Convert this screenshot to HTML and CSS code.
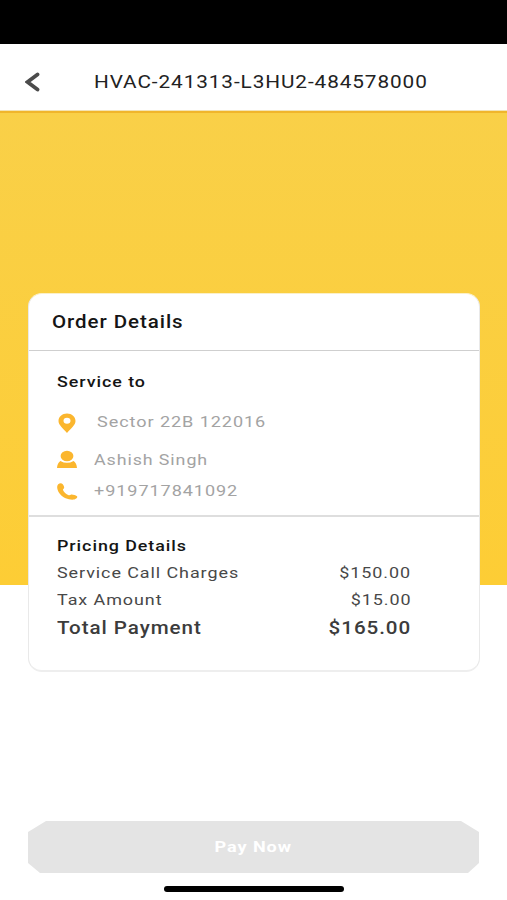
FILE: index.html
```html
<!DOCTYPE html>
<html lang="en">
<head>
<meta charset="utf-8">
<title>Order payment</title>
<link rel="stylesheet" href="styles.css">
</head>
<body>
<div class="status"></div>
<header class="header">
  <svg class="back" viewBox="0 0 16 20"><path d="M12.500 2.500 2.500 10 12.500 17.500"/></svg>
  <h1 class="title"><span class="wide">HVAC-241313-L3HU2-484578000</span></h1>
</header>
<main class="main">
  <section class="card">
    <h2 class="card-title"><span class="wide">Order Details</span></h2>
    <div class="service">
      <h3 class="subtitle"><span class="wide">Service to</span></h3>
      <div class="contact address">
        <svg class="icon" viewBox="0 0 20 20"><path fill-rule="evenodd" d="M10 .5C5.200 .5 1.500 3.800 1.500 8C1.500 12 6 15.500 10 20C14 15.500 18.500 12 18.500 8C18.500 3.800 14.800 .5 10 .5ZM10 4.700A3.500 3 0 1 1 10 10.700A3.500 3 0 1 1 10 4.700Z"/></svg>
        <span class="wide">Sector 22B 122016</span>
      </div>
      <div class="contact person">
        <svg class="icon" viewBox="0 0 20 20"><ellipse cx="10" cy="6" rx="6.400" ry="5.300"/><path d="M0 18C.2 14.800 1.400 12.200 3.400 10.900Q10 14.800 16.600 10.900C18.600 12.200 19.800 14.800 20 18Z"/></svg>
        <span class="wide">Ashish Singh</span>
      </div>
      <div class="contact phone">
        <svg class="icon" viewBox="0 0 20 20"><path d="M1.200 2.200C2.600 1 4.500 .8 5.500 1.900C6.700 3.300 7.500 5 7.100 6C6.800 6.800 5.800 7 6 8C6.700 9.900 9 12.200 11.700 13.200C12.800 13.500 13.300 12.800 14.200 12.600C15.800 12.400 18.500 13.300 20 14.300C21 15.200 19.300 17 17.300 17.500C12.500 18.300 6.300 16 3.200 12.200C.5 9-.9 4.300 1.200 2.200Z"/></svg>
        <span class="wide">+919717841092</span>
      </div>
    </div>
    <div class="pricing">
      <h3 class="subtitle"><span class="wide">Pricing Details</span></h3>
      <div class="row"><span class="wide">Service Call Charges</span><span class="wide amount">$150.00</span></div>
      <div class="row"><span class="wide">Tax Amount</span><span class="wide amount">$15.00</span></div>
      <div class="row total"><span class="wide">Total Payment</span><span class="wide amount">$165.00</span></div>
    </div>
  </section>
</main>
<footer class="footer">
  <button class="pay"><span class="wide">Pay Now</span></button>
  <div class="home"></div>
</footer>
</body>
</html>
```

FILE: styles.css
```css
* { box-sizing: border-box; }
body {
  margin: 0;
  height: 900px;
  display: flex;
  flex-direction: column;
  overflow: hidden;
  background: #fff;
  color: #151515;
  font-family: Roboto, sans-serif;
}
h1, h2, h3 { margin: 0; font-weight: 500; }
.wide {
  display: inline-block;
  white-space: nowrap;
  transform: scaleX(1.165);
  transform-origin: left center;
}
.amount { transform-origin: right center; }
.status { height: 44px; background: #000; }
.header {
  height: 67px;
  display: flex;
  align-items: center;
  padding: 9px 0 0 25px;
  border-bottom: 1px solid #f3e3b5;
}
.back { width: 16px; height: 20px; fill: none; stroke: #4b4b4b; stroke-width: 3.8; stroke-linecap: round; }
.title { margin-left: 52.5px; font-size: 18px; font-weight: 400; letter-spacing: .8px; color: #222; }
.title .wide { transform: scaleX(1.152); }
.main {
  flex: 1;
  padding: 180px 27px 0 28px;
  background: linear-gradient(#f9d048, #fdcd35) top / 100% 474px no-repeat;
  background-origin: border-box;
  border-top: 2px solid #f0b52c;
}
.card {
  height: 379px;
  border: 1px solid #e9e9e9;
  border-top-color: #fbf0c8;
  border-bottom: 2px solid #eeeeee;
  border-radius: 14px;
  background: #fff;
}
.card-title {
  height: 57px;
  padding-left: 23px;
  line-height: 56px;
  font-size: 17.5px;
  letter-spacing: .8px;
  border-bottom: 1px solid #cfcfcf;
}
.card-title .wide { transform: scaleX(1.172); }
.service { height: 166px; padding: 21px 0 0 28px; border-bottom: 2px solid #dedede; }
.subtitle { height: 20px; line-height: 20px; font-size: 15px; letter-spacing: .8px; }
.subtitle .wide { transform: scaleX(1.19); }
.contact { display: flex; align-items: center; height: 32px; font-size: 15.5px; letter-spacing: .8px; color: #a3a3a3; }
.contact .wide { padding-bottom: 2px; }
.icon { width: 20px; height: 20px; margin-left: -.4px; fill: #fbb62e; overflow: visible; }
.address { margin-top: 15px; }
.address .wide { margin-left: 20.4px; }
.person { margin-top: 5px; }
.person .wide, .phone .wide { margin-left: 17.4px; }
.person .wide { padding-bottom: 0; transform: scaleX(1.15); }
.pricing { padding: 19px 68px 0 28px; }
.row { display: flex; justify-content: space-between; height: 27px; line-height: 27px; font-size: 15.5px; letter-spacing: .8px; color: #484848; }
.subtitle + .row { margin-top: 4px; }
.row .wide { transform: scaleX(1.158); }
.total { height: 28px; line-height: 28px; font-size: 17.5px; font-weight: 500; color: #3c3c3c; }
.total .wide { transform: scaleX(1.177); }
.footer { padding: 0 28px 8px; height: 79px; display: flex; flex-direction: column; align-items: center; justify-content: space-between; }
.pay {
  width: 451px;
  height: 52px;
  padding: 0;
  border: 0;
  background: #e4e4e4;
  clip-path: polygon(18px 0, 433px 0, 100% 11px, 100% 42px, 440px 100%, 12px 100%, 0 42px, 0 11px);
  color: #fff;
  font: 700 15.5px Roboto, sans-serif;
  letter-spacing: .8px;
}
.pay .wide { transform-origin: center; }
.home { width: 180px; height: 6px; border-radius: 3px; background: #000; }
```
